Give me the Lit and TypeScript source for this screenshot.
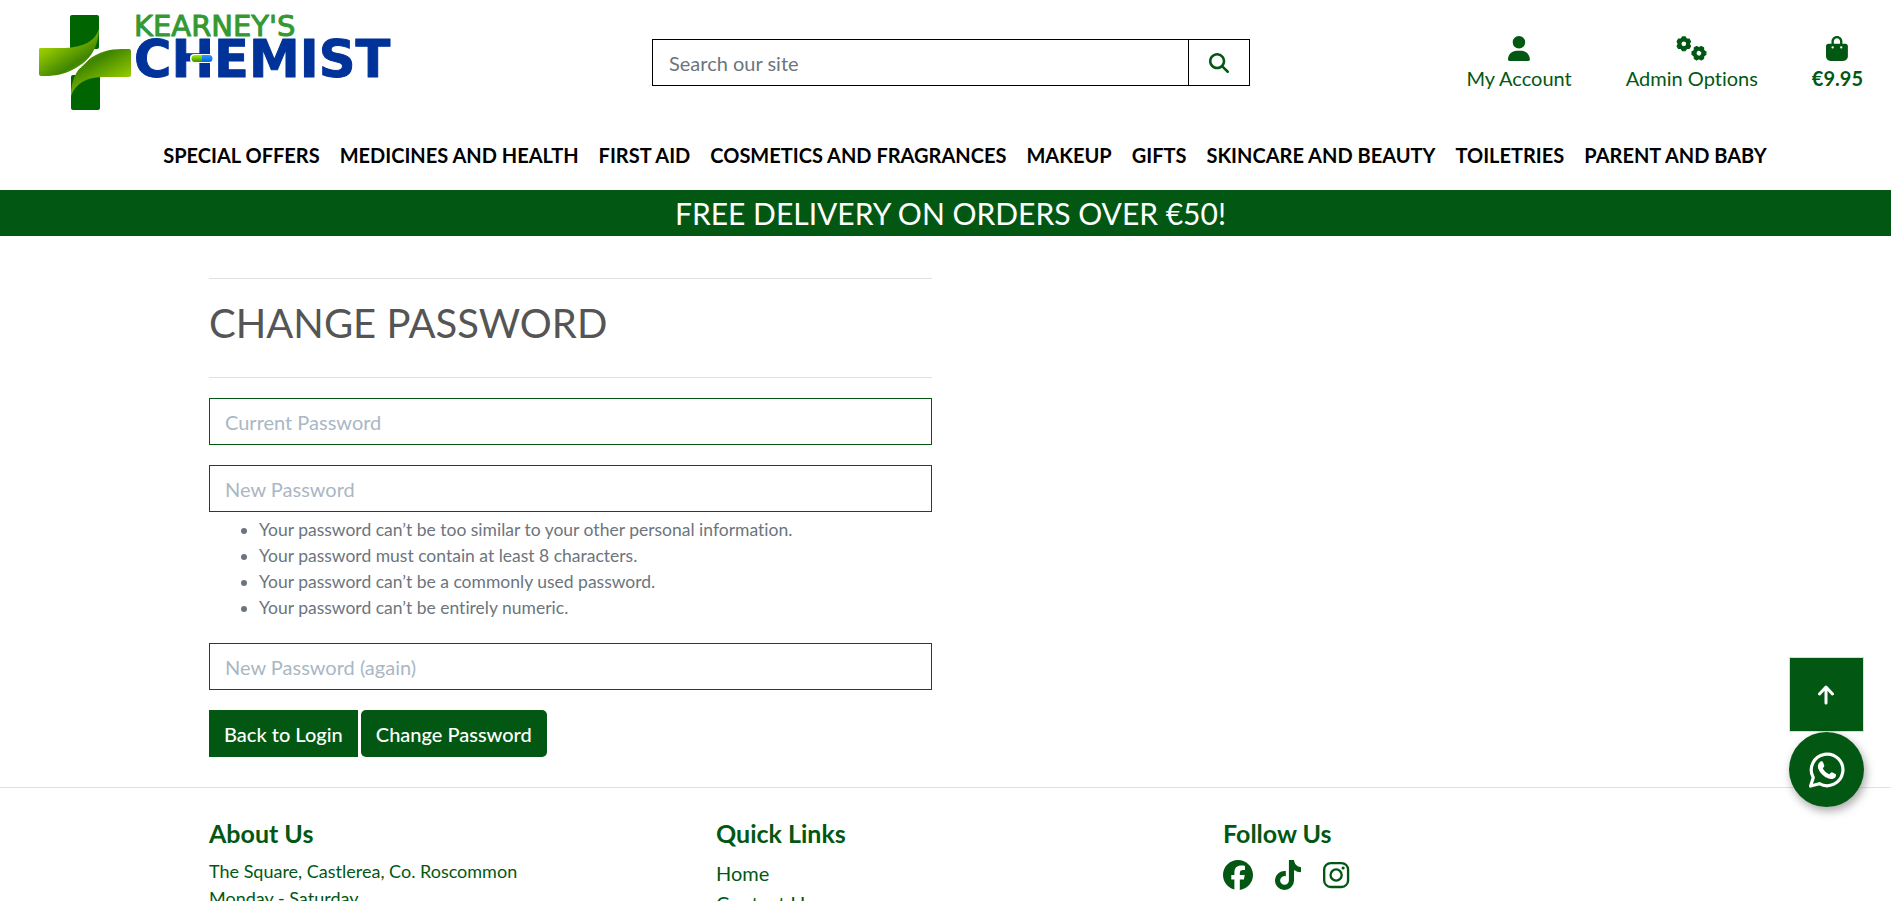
import { LitElement, html, svg, css } from "lit";
import { customElement } from "lit/decorators.js";

const NAV = [
  "Special Offers", "Medicines and Health", "First Aid", "Cosmetics and Fragrances",
  "Makeup", "Gifts", "Skincare and Beauty", "Toiletries", "Parent and Baby",
];

const RULES = [
  "Your password can’t be too similar to your other personal information.",
  "Your password must contain at least 8 characters.",
  "Your password can’t be a commonly used password.",
  "Your password can’t be entirely numeric.",
];

const ICONS = {
  search: "M416 208c0 45.9-14.9 88.3-40 122.7L502.6 457.4c12.5 12.5 12.5 32.8 0 45.3s-32.8 12.5-45.3 0L330.7 376c-34.4 25.2-76.8 40-122.7 40C93.1 416 0 322.9 0 208S93.1 0 208 0S416 93.1 416 208zM208 352a144 144 0 1 0 0-288 144 144 0 1 0 0 288z",
  user: "M224 256A128 128 0 1 0 224 0a128 128 0 1 0 0 256zm-45.7 48C79.8 304 0 383.8 0 482.3C0 498.7 13.3 512 29.7 512H418.3c16.4 0 29.7-13.3 29.7-29.7C448 383.8 368.2 304 269.7 304H178.3z",
  bag: "M160 112c0-35.3 28.7-64 64-64s64 28.7 64 64v48H160V112zm-48 48H48c-26.5 0-48 21.5-48 48V416c0 53 43 96 96 96H352c53 0 96-43 96-96V208c0-26.5-21.5-48-48-48H336V112C336 50.1 285.9 0 224 0S112 50.1 112 112v48zm24 48a24 24 0 1 1 0 48 24 24 0 1 1 0-48zm152 24a24 24 0 1 1 48 0 24 24 0 1 1 -48 0z",
  facebook: "M512 256C512 114.6 397.4 0 256 0S0 114.6 0 256C0 376 82.7 476.8 194.2 504.5V334.2H141.4V256h52.8V222.3c0-87.1 39.4-127.5 125-127.5c16.2 0 44.2 3.2 55.7 6.4V172c-6-.6-16.5-1-29.6-1c-42 0-58.2 15.9-58.2 57.2V256h83.6l-14.4 78.2H287V510.1C413.8 494.8 512 386.9 512 256h0z",
  tiktok: "M448 209.9a210.1 210.1 0 0 1-122.8-39.2V349.4A162.6 162.6 0 1 1 185 188.3V278.2a74.6 74.6 0 1 0 52.2 71.2V0l88 0a121.2 121.2 0 0 0 1.9 22.2A122.2 122.2 0 0 0 381 102.4a121.4 121.4 0 0 0 67 20.1Z",
};

const glyph = (d: string, width: number, cls: string) => html`
  <svg class=${cls} viewBox="0 0 ${width} 512" aria-hidden="true"><path d=${d} fill="currentColor" /></svg>`;

const gear = (x: number, y: number, turn: number) => svg`
  <g transform="translate(${x} ${y}) rotate(${turn})">
    <circle r="86" fill="none" stroke="currentColor" stroke-width="76" />
    ${[0, 60, 120, 180, 240, 300].map((a) => svg`
      <path transform="rotate(${a})" d="M-50 -104L-28 -142H28L50 -104Z"
        fill="currentColor" stroke="currentColor" stroke-width="24" stroke-linejoin="round" />`)}
  </g>`;

@customElement("app-root")
export class AppRoot extends LitElement {
  static styles = css`
    :host {
      --green: #025813;
      display: block;
      height: 100vh;
      overflow: hidden;
      background: #fff;
      color: #212529;
      font: 20px/30px Lato, sans-serif;
      font-variant-ligatures: none;
    }
    *, *::before, *::after { box-sizing: border-box; }
    a { color: inherit; text-decoration: none; }
    h1, h2, p, ul { margin: 0; padding: 0; }
    hr { margin: 0; border: 0; border-top: 1px solid #e0e1e2; }
    .sr { position: absolute; opacity: 0; pointer-events: none; }
    .top {
      display: grid;
      grid-template-columns: 1fr 598px 1fr;
      align-items: start;
      padding: 0 28px 0 39px;
    }
    .logo { display: block; width: 366px; height: 126px; }
    .logo svg { display: block; width: 100%; height: 100%; }
    .kearney {
      font: 29px "DejaVu Sans", sans-serif;
      fill: #339933; stroke: #339933; stroke-width: 1px; stroke-linejoin: round;
    }
    .chemist {
      font: bold 51px "DejaVu Sans", sans-serif;
      fill: #003399; stroke: #003399; stroke-width: 1px; stroke-linejoin: round;
    }
    .search { display: flex; margin-top: 39px; }
    .search input {
      flex: 1; min-width: 0; height: 47px; padding: 0 16px;
      border: 1px solid #000; border-radius: 0; background: #fff;
      font: inherit; color: inherit; outline: 0;
    }
    .search input::placeholder { color: #6c757d; opacity: 1; }
    .search button {
      display: grid; place-items: center; width: 62px; height: 47px;
      margin-left: -1px; padding: 0; border: 1px solid #000;
      background: #fff; color: var(--green);
    }
    .i-search { width: 20px; height: 20px; }
    .account {
      display: flex; justify-content: flex-end; gap: 54px;
      margin-top: 36px; list-style: none; color: var(--green);
    }
    .account a { display: flex; flex-direction: column; align-items: center; gap: 2px; }
    .i-acc { height: 25px; display: block; }
    .total { font-weight: 700; }
    .nav {
      display: flex; justify-content: center; gap: 20px;
      padding: 14px 0 20px 39px; height: 64px;
      list-style: none; color: #000; font-weight: 700; text-transform: uppercase;
    }
    .banner {
      height: 46px; background: var(--green); color: #fff;
      font-size: 30px; line-height: 47px; text-align: center; padding-left: 10px;
    }
    .wrap { max-width: 1473px; margin: 0 auto; }
    .form { width: 723px; max-width: 100%; padding-top: 42px; }
    h1 {
      padding: 23px 0 33px; color: #555; font-weight: 400;
      font-size: 40px; line-height: 42px;
    }
    .field {
      display: block; width: 100%; height: 47px; margin-top: 20px; padding: 0 15px;
      border: 1px solid var(--green); border-radius: 0; background: #fff;
      font: inherit; color: inherit; outline: 0;
    }
    .field::placeholder { color: #aab7c4; opacity: 1; }
    .rules {
      margin: 5px 0 22px; padding-left: 50px;
      color: #6c757d; font-size: 0.875em; line-height: 26px;
    }
    .actions { display: flex; gap: 3px; padding: 20px 0 30px; }
    .btn {
      height: 47px; padding: 0 15px; border: 0; background: var(--green); color: #fff;
      font: inherit; line-height: 49px; font-weight: 500;
    }
    .btn.round { border-radius: 5px; }
    .foot {
      display: grid; grid-template-columns: repeat(3, 1fr); gap: 48px;
      padding-top: 30px; color: var(--green);
    }
    h2 { font-size: 25px; line-height: 30px; font-weight: 700; }
    .about { margin-top: 10px; font-size: 18px; line-height: 27px; }
    .links { margin-top: 10px; list-style: none; }
    .social { display: flex; gap: 22px; align-items: center; margin-top: 12px; }
    .social a, .social svg { display: block; height: 30px; }
    .dock {
      position: fixed; right: 27px; bottom: 94px; z-index: 2;
      display: flex; flex-direction: column; align-items: center;
    }
    .up, .chat {
      display: grid; place-items: center; padding: 0; border: 0;
      background: var(--green); color: #fff;
    }
    .up { width: 75px; height: 75px; border: 1px solid #d5ded7; }
    .up svg { width: 18px; height: 20px; }
    .chat {
      width: 75px; height: 75px; border-radius: 50%;
      box-shadow: 2px 4px 10px rgba(0, 0, 0, 0.35);
    }
    .chat svg { width: 36px; height: 36px; }
  `;

  private logo() {
    return html`<svg viewBox="39 0 366 126" role="img" aria-label="Kearney's Chemist">
      <defs>
        <linearGradient id="leafA" x1="0" y1="0" x2="0.8" y2="1">
          <stop offset="0" stop-color="#bdf000" /><stop offset="0.35" stop-color="#8fc400" />
          <stop offset="0.75" stop-color="#3f8500" /><stop offset="1" stop-color="#7fb800" />
        </linearGradient>
        <linearGradient id="leafB" x1="1" y1="1" x2="0.3" y2="0">
          <stop offset="0" stop-color="#d0ff00" /><stop offset="0.3" stop-color="#93c800" />
          <stop offset="0.8" stop-color="#3f8500" /><stop offset="1" stop-color="#5f9c00" />
        </linearGradient>
        <linearGradient id="pillA" x1="0" y1="0" x2="0" y2="1">
          <stop offset="0" stop-color="#a8f000" /><stop offset="1" stop-color="#3c9000" />
        </linearGradient>
        <linearGradient id="pillB" x1="0" y1="0" x2="0" y2="1">
          <stop offset="0" stop-color="#2a9cff" /><stop offset="1" stop-color="#0064e0" />
        </linearGradient>
      </defs>
      <rect x="70" y="15" width="29" height="34" rx="2" fill="#006400" />
      <rect x="71" y="75" width="29" height="35" rx="2" fill="#006400" />
      <path d="M39 49Q39 48 41 48H65C84 47 95 41 99 29C98 49 89 60 79 66C67 74 56 76 45 76H41Q39 76 39 74Z" fill="url(#leafA)" />
      <path d="M131 75Q131 77 129 77H104C86 77 75 84 71 96C71 77 79 67 88 60C98 52 110 49 122 49H129Q131 49 131 51Z" fill="url(#leafB)" />
      <path d="M72 73Q82 68 90 58" fill="none" stroke="#fff" stroke-width="1" />
      <text class="kearney" x="134" y="36">KEARNEY'S</text>
      <text class="chemist" x="134" y="77">CHEMIST</text>
      <rect x="190" y="54" width="24" height="9" rx="4" fill="#fff" />
      <path d="M202 55H195A3.500 3.500 0 0 0 195 62H202Z" fill="url(#pillA)" />
      <path d="M202 55H209A3.500 3.500 0 0 1 209 62H202Z" fill="url(#pillB)" />
    </svg>`;
  }

  render() {
    return html`
      <header>
        <div class="top">
          <a class="logo" href="#home">${this.logo()}</a>
          <form class="search" role="search">
            <label class="sr" for="q">Search our site</label>
            <input id="q" type="search" placeholder="Search our site" />
            <button type="button" aria-label="Search">${glyph(ICONS.search, 512, "i-search")}</button>
          </form>
          <ul class="account">
            <li><a href="#account">${glyph(ICONS.user, 448, "i-acc")}My Account</a></li>
            <li><a href="#admin">
              <svg class="i-acc" viewBox="0 0 640 512" aria-hidden="true">${gear(160, 160, 0)}${gear(470, 352, 30)}</svg>
              Admin Options</a></li>
            <li><a class="total" href="#bag">${glyph(ICONS.bag, 448, "i-acc")}€9.95</a></li>
          </ul>
        </div>
        <nav><ul class="nav">${NAV.map((n) => html`<li><a href="#shop">${n}</a></li>`)}</ul></nav>
        <div class="banner">FREE DELIVERY ON ORDERS OVER €50!</div>
      </header>
      <main class="wrap">
        <form class="form">
          <hr />
          <h1>CHANGE PASSWORD</h1>
          <hr />
          <label class="sr" for="old">Current Password</label>
          <input class="field" id="old" type="password" placeholder="Current Password" />
          <label class="sr" for="new1">New Password</label>
          <input class="field" id="new1" type="password" placeholder="New Password" />
          <ul class="rules">${RULES.map((r) => html`<li>${r}</li>`)}</ul>
          <label class="sr" for="new2">New Password (again)</label>
          <input class="field" id="new2" type="password" placeholder="New Password (again)" />
          <div class="actions">
            <a class="btn" href="#login">Back to Login</a>
            <button class="btn round" type="button">Change Password</button>
          </div>
        </form>
      </main>
      <hr />
      <footer class="wrap foot">
        <section>
          <h2>About Us</h2>
          <p class="about">The Square, Castlerea, Co. Roscommon<br />Monday - Saturday</p>
        </section>
        <section>
          <h2>Quick Links</h2>
          <ul class="links">
            <li><a href="#home">Home</a></li>
            <li><a href="#contact">Contact Us</a></li>
          </ul>
        </section>
        <section>
          <h2>Follow Us</h2>
          <div class="social">
            <a href="#facebook" aria-label="Facebook">${glyph(ICONS.facebook, 512, "soc")}</a>
            <a href="#tiktok" aria-label="TikTok">${glyph(ICONS.tiktok, 448, "soc")}</a>
            <a href="#instagram" aria-label="Instagram">
              <svg viewBox="0 0 448 512" fill="none" stroke="currentColor" stroke-width="40" aria-hidden="true">
                <rect x="20" y="52" width="408" height="408" rx="112" />
                <circle cx="224" cy="256" r="95" />
                <circle cx="343" cy="137" r="27" fill="currentColor" stroke="none" />
              </svg>
            </a>
          </div>
        </section>
      </footer>
      <div class="dock">
        <button class="up" type="button" aria-label="Back to top">
          <svg viewBox="0 0 18 20" fill="none" stroke="currentColor" stroke-width="3" stroke-linecap="round" stroke-linejoin="round" aria-hidden="true">
            <path d="M8 18V3M1.500 9L8 2L14.500 9" />
          </svg>
        </button>
        <button class="chat" type="button" aria-label="WhatsApp">
          <svg viewBox="0 0 36 36" aria-hidden="true">
            <path d="M1.600 34L4.300 25.600A15.800 15.800 0 1 1 10.400 31.700Z" fill="none" stroke="currentColor" stroke-width="3.200" stroke-linejoin="round" />
            <path d="M11.500 9.500C13 9 13.600 9.300 14 10.300L15.300 13.500C15.600 14.400 14.300 15.600 13.700 16.300C15.300 19.200 17.500 21.200 20.400 22.300C21.200 21.500 22.200 19.900 23 20.200L26.500 21.900C27.400 22.400 27 24 26.500 25C25 27.200 22 27.500 19.500 26.600C14.800 25 11.300 21.300 9.500 17.300C8.200 14.200 9.300 11 11.500 9.500Z" fill="currentColor" />
          </svg>
        </button>
      </div>
    `;
  }
}
